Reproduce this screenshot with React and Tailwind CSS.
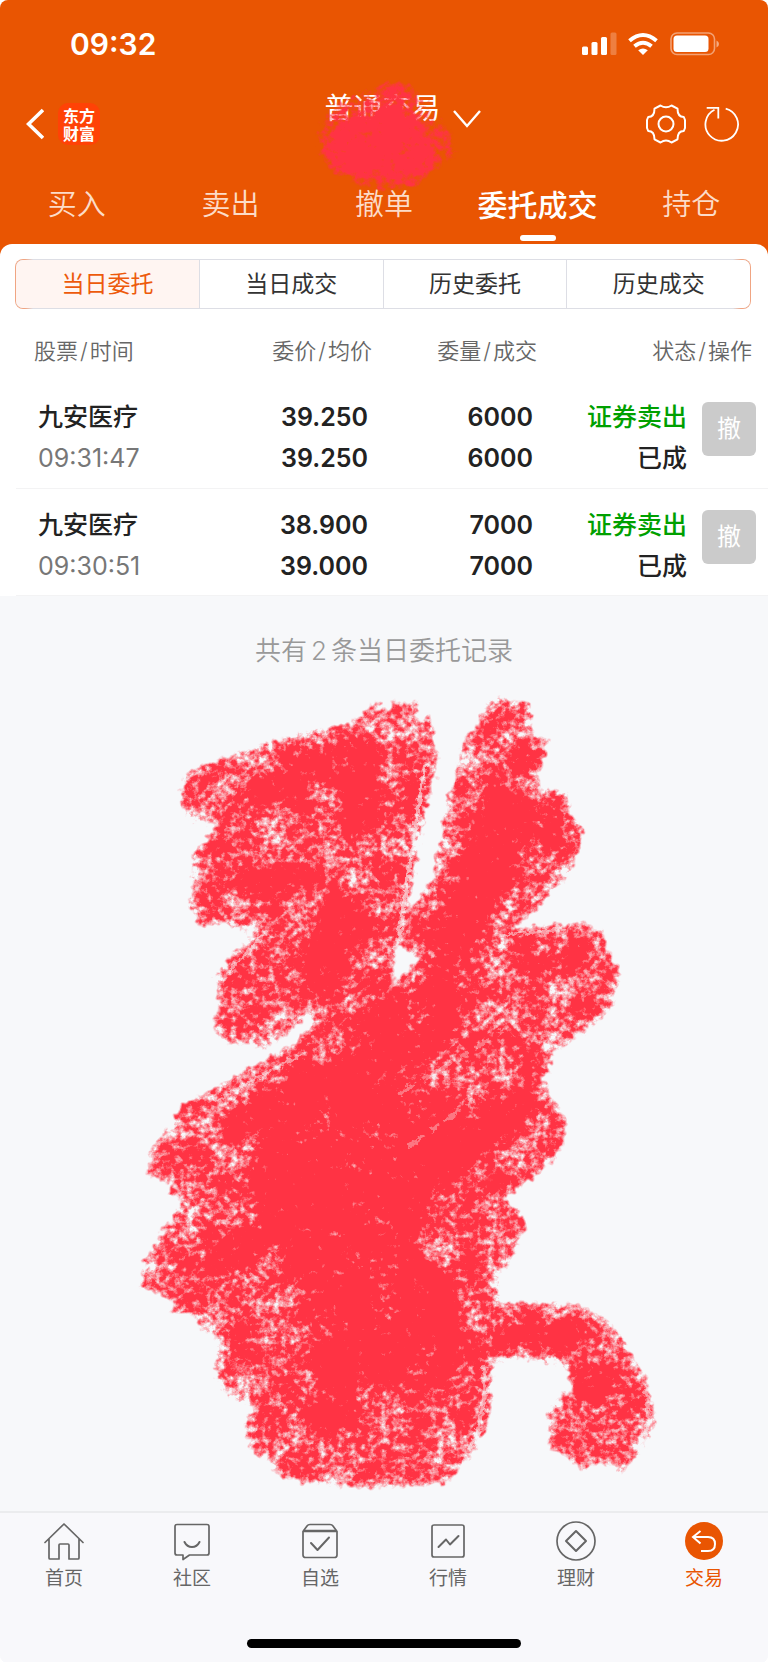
import { Fragment } from 'react';

const TABS = ['买入', '卖出', '撤单', '委托成交', '持仓'];
const SEGMENTS = ['当日委托', '当日成交', '历史委托', '历史成交'];

const ORDERS = [
  { name: '九安医疗', time: '09:31:47', price: '39.250', avg: '39.250', amount: '6000', filled: '6000', side: '证券卖出', status: '已成' },
  { name: '九安医疗', time: '09:30:51', price: '38.900', avg: '39.000', amount: '7000', filled: '7000', side: '证券卖出', status: '已成' },
];

const NAV = [
  { label: '首页', icon: HomeIcon },
  { label: '社区', icon: CommunityIcon },
  { label: '自选', icon: WatchlistIcon },
  { label: '行情', icon: MarketIcon },
  { label: '理财', icon: WealthIcon },
  { label: '交易', icon: TradeIcon, active: true },
];

const line = { fill: 'none', stroke: 'currentColor', strokeWidth: 1.7, strokeLinecap: 'round', strokeLinejoin: 'round' };

function HomeIcon() {
  return (
    <svg viewBox="0 0 40 40" className="h-10 w-10" {...line}>
      <path d="M1 21.5 20 3l19 18.5M5 18v19q0 1 1 1h9V24q0-1 1-1h8q1 0 1 1v14h9q1 0 1-1V18" />
    </svg>
  );
}

function CommunityIcon() {
  return (
    <svg viewBox="0 0 40 40" className="h-10 w-10" {...line}>
      <path d="M5 3.5h30q2 0 2 2V32q0 2-2 2H17.500l-6.500 4.500V34H5q-2 0-2-2V5.500q0-2 2-2Z" />
      <path d="M12.500 21q2.500 5 7.500 5t7.500-5" strokeWidth="2" />
    </svg>
  );
}

function WatchlistIcon() {
  return (
    <svg viewBox="0 0 40 40" className="h-10 w-10" {...line}>
      <path d="M3 10.500 7 5q1-1.500 3-1.500h20q2 0 3 1.500l4 5.500V34q0 2.500-2.500 2.500h-29Q3 36.500 3 34Z" />
      <path d="M4 10h32" strokeWidth="2.400" />
      <path d="m11 22 6.500 7L29 16.500" strokeWidth="2" />
    </svg>
  );
}

function MarketIcon() {
  return (
    <svg viewBox="0 0 40 40" className="h-10 w-10" {...line}>
      <rect x="4" y="4" width="32" height="32" rx="2" />
      <path d="m10.500 26 7.500-7.500 4 5L30.500 15" strokeWidth="2" />
    </svg>
  );
}

function WealthIcon() {
  return (
    <svg viewBox="0 0 40 40" className="h-10 w-10" {...line}>
      <circle cx="20" cy="20" r="19" />
      <path d="m20 10 10 10-10 10L10 20Z" strokeWidth="2" />
    </svg>
  );
}

function TradeIcon() {
  return (
    <svg viewBox="0 0 40 40" className="h-10 w-10" fill="none">
      <circle cx="20" cy="20" r="19" fill="#e95502" />
      <path d="M16.500 10 9 16l7.500 6.500M9.500 16H24q7 0 7 7t-7 7h-7" stroke="#fff" strokeWidth="2" />
    </svg>
  );
}

function StatusIcons() {
  return (
    <svg viewBox="0 0 138 24" className="h-6 w-[138px]" fill="none">
      <g fill="#fff">
        <rect x="0" y="14.500" width="6" height="8.500" rx="1.500" />
        <rect x="9.500" y="10" width="6" height="13" rx="1.500" />
        <rect x="19" y="5" width="6" height="18" rx="1.500" />
        <rect x="28.500" y="0.500" width="6" height="22.500" rx="1.500" opacity="0.25" />
        <path d="m61 23-4.800-4.800q4.800-3.600 9.600 0Z" />
      </g>
      <path d="M47.500 8.700q13.500-11.400 27 0" stroke="#fff" strokeWidth="4" />
      <path d="M52.500 14.300q8.500-7 17 0" stroke="#fff" strokeWidth="4" />
      <rect x="89" y="1" width="43.500" height="21.500" rx="6" stroke="#fff" strokeOpacity="0.45" strokeWidth="1.600" />
      <rect x="91.500" y="3.500" width="35" height="16.500" rx="3.500" fill="#fff" />
      <path d="M134.500 8.500q2.500 1 2.500 3.500t-2.500 3.500Z" fill="#fff" opacity="0.5" />
    </svg>
  );
}

function GearIcon() {
  return (
    <svg viewBox="0 0 40 40" className="h-10 w-10" fill="none" stroke="#fff" strokeWidth="2" strokeLinejoin="round">
      <path d="M14.500 1.500q5.500 3.500 11 0l6 3.200q0 8.300 6.300 8.300l1.200 3v8l-1.200 3q-6.300 0-6.300 8.300l-6 3.200q-5.500-4-11 0l-6-3.200Q8.500 27 2.200 27L1 24v-8l1.200-3q6.300 0 6.300-8.300Z" />
      <circle cx="20" cy="20" r="7.500" />
    </svg>
  );
}

function RefreshIcon() {
  return (
    <svg viewBox="0 0 36 36" className="h-9 w-9" fill="none" stroke="#fff" strokeWidth="1.800">
      <path d="M21.700 2.600A16.300 16.300 0 1 1 10.500 3.800M2.700 1.800H14.300V12.600" />
    </svg>
  );
}

// Chalk texture: density of the strokes plus fine and coarse grain, cut by a ragged edge
function ChalkFilter({ id, blur, offset }) {
  return (
    <filter id={id} x="-10%" y="-10%" width="120%" height="120%" colorInterpolationFilters="sRGB">
      <feTurbulence type="fractalNoise" baseFrequency="0.16" numOctaves="4" seed="11" result="noise" />
      <feColorMatrix in="noise" type="matrix" values="0 0 0 0 0  0 0 0 0 0  0 0 0 0 0  1 0 0 0 0" result="fine" />
      <feTurbulence type="fractalNoise" baseFrequency="0.035" numOctaves="3" seed="4" />
      <feColorMatrix type="matrix" values="0 0 0 0 0  0 0 0 0 0  0 0 0 0 0  1 0 0 0 0" result="coarse" />
      <feComposite in="fine" in2="coarse" operator="arithmetic" k1="0" k2="0.55" k3="0.45" k4="0" result="grain" />
      <feDisplacementMap in="SourceGraphic" in2="noise" scale="14" xChannelSelector="G" yChannelSelector="B" result="ragged" />
      <feGaussianBlur in="SourceGraphic" stdDeviation={blur} result="density" />
      <feComposite in="density" in2="grain" operator="arithmetic" k1="0" k2="1.8" k3="4" k4={offset} result="chalk" />
      <feGaussianBlur in="ragged" stdDeviation="0.8" />
      <feComponentTransfer result="mask">
        <feFuncA type="linear" slope="2.500" intercept="-0.200" />
      </feComponentTransfer>
      <feFlood floodColor="#ff3344" />
      <feComposite in2="chalk" operator="in" />
      <feComposite in2="mask" operator="in" />
    </filter>
  );
}

function TitleSmudge() {
  return (
    <svg viewBox="0 0 180 130" className="pointer-events-none absolute -top-4 -left-7 h-[130px] w-[180px]">
      <defs>
        <ChalkFilter id="chalk-title" blur="5" offset="-2.350" />
      </defs>
      <g filter="url(#chalk-title)">
        <path
          fill="#f34"
          fillOpacity="0.5"
          d="m62 14 30-7 22 1 12 14 14 20 15 14 7 24-10 9-24 15-12 9-30 3-30-8-20-12-16-20 4-26 16-20Z"
        />
        <path fill="#f34" d="m46 48 40-16 34 8 24 32-28 22-24 12-40-6-26-22Z" />
      </g>
    </svg>
  );
}

function Scribble() {
  return (
    <svg viewBox="0 680 768 830" className="block w-full" aria-hidden="true">
      <defs>
        <ChalkFilter id="chalk" blur="7" offset="-2.050" />
        <filter id="streak" x="-10%" y="-10%" width="120%" height="120%">
          <feTurbulence type="fractalNoise" baseFrequency="0.2" numOctaves="3" seed="3" result="noise" />
          <feDisplacementMap in="SourceGraphic" in2="noise" scale="8" xChannelSelector="R" yChannelSelector="G" />
          <feGaussianBlur stdDeviation="0.700" />
        </filter>
      </defs>
      <g filter="url(#chalk)">
        <path
          fill="#f34"
          fillOpacity="0.52"
          fillRule="evenodd"
          d="M182 777 192 768 244 750 302 730 350 723 380 698 378 712 388 710 396 696 400 706 419 697 418 722 431 715 438 760 430 793 419 847 407 913
            433 880 436 857 443 820 454 777 464 737 478 723 490 697 504 694 512 702 529 700 535 733 548 738 538 787 567 792 571 813 585 827
            574 867 536 910 512 928 578 922 603 928 607 950 621 970 612 1007 595 1023 554 1052 548 1067 543 1083 567 1122 564 1143 550 1163
            505 1197 519 1213 529 1225 512 1253 510 1263 498 1270 498 1303 543 1301 581 1305 612 1322 643 1370 656 1413 653 1433 636 1457
            624 1471 602 1462 578 1470 571 1457 550 1450 547 1413 560 1393 572 1393 569 1370 557 1362 529 1358 493 1363 492 1400 486 1430
            471 1453 447 1482 378 1487 316 1483 278 1475 269 1460 251 1450 245 1427 256 1402 240 1403 220 1385 214 1363 220 1340 199 1327
            195 1313 168 1312 178 1300 140 1287 144 1260 161 1233 185 1197 165 1195 178 1185 147 1173 151 1147 171 1127 178 1107 195 1098 244 1070
            295 1042 311 1023 309 1008 295 1028 263 1048 254 1043 223 1042 213 1023 220 1000 214 977 247 937 257 927 240 930 223 923 199 925
            189 903 194 880 190 857 220 823 192 822 182 807ZM396 944 420 957 392 984Z"
        />
        <g fill="none" stroke="#f34" strokeLinecap="round" strokeLinejoin="round" strokeOpacity="0.7">
          <path strokeWidth="30" d="M262 795 345 758" />
          <path strokeWidth="36" d="M362 758 358 820" />
          <path strokeWidth="22" d="M240 882 310 885" />
          <path strokeWidth="46" d="M345 920 322 970" />
          <path strokeWidth="44" d="M508 800 485 860 455 950" />
          <path strokeWidth="34" d="M525 820 475 900" />
          <path strokeWidth="24" d="M545 965 580 955" />
          <path strokeWidth="28" d="M235 1125 330 1080M215 1265 300 1215" />
          <path strokeWidth="34" d="M430 1160 520 1105" />
          <path strokeWidth="22" d="M500 1338 565 1338 596 1380 606 1405" />
          <path strokeWidth="34" d="M335 1370 325 1420" />
        </g>
        <path fill="#f34" fillOpacity="0.75" d="m370 1010 70-40 40 30-50 50-20 60 50-10 60-10-20 50-70 60-20 60 50 20 15 80-90 30-60 10-10-60-15-60-40-50-10-60 50-80Z" />
      </g>
      {/* Dry streaks between the strokes */}
      <g fill="none" stroke="#f7f8fa" strokeLinecap="round" filter="url(#streak)">
        <path strokeOpacity="0.6" strokeWidth="4" d="M425 765Q412 850 395 960" />
        <path strokeOpacity="0.35" strokeWidth="4" strokeDasharray="16 12 6 10" d="M400 1092 500 1032M410 1145 486 1090" />
        <path strokeOpacity="0.5" strokeWidth="4" d="M484 1366Q487 1415 470 1448M646 1385Q652 1430 638 1448" />
        <path strokeOpacity="0.5" strokeWidth="3" d="M505 934 565 928M215 1100 302 1053M228 972 265 932" />
      </g>
    </svg>
  );
}

function OrderRow({ order }) {
  return (
    <tr className="h-[107px] border-b border-[#f3f3f4] text-right text-[25px] leading-[41px] font-semibold text-[#222]">
      <td className="pt-2 pl-[22px] text-left">
        <div className="font-medium">{order.name}</div>
        <div className="font-normal text-[#777]">{order.time}</div>
      </td>
      <td className="pt-2 pr-1">
        <div>{order.price}</div>
        <div>{order.avg}</div>
      </td>
      <td className="pt-2 pr-1">
        <div>{order.amount}</div>
        <div>{order.filled}</div>
      </td>
      <td className="pt-2 font-medium">
        <div className="text-[#00a000]">{order.side}</div>
        <div>{order.status}</div>
      </td>
      <td className="pt-[21px] pr-3 align-top">
        <button type="button" className="ml-auto block h-[54px] w-[54px] rounded-md bg-[#cbcbcb] text-2xl font-normal text-white">
          撤
        </button>
      </td>
    </tr>
  );
}

export default function App() {
  return (
    <div className="bg-white font-['Inter','Noto_Sans_CJK_SC',sans-serif]">
      <div className="flex min-h-screen flex-col overflow-hidden rounded-lg bg-[#f7f8fa]">
        <header className="bg-[#e95502] text-white">
          {/* Status bar */}
          <div className="flex h-[84px] items-center justify-between pt-1 pr-[48px] pl-[70px]">
            <span className="text-[30px] font-semibold">09:32</span>
            <StatusIcons />
          </div>

          {/* Title bar */}
          <div className="grid h-20 grid-cols-3 items-center pr-[28px] pl-[26px]">
            <div className="flex items-center gap-[14px]">
              <button type="button" aria-label="返回">
                <svg viewBox="0 0 18 32" className="h-8 w-[18px]" fill="none" stroke="#fff" strokeWidth="3.600">
                  <path d="M17 2 2.500 16 17 30" />
                </svg>
              </button>
              <span className="flex h-[42px] w-[42px] items-center justify-center rounded-[10px] bg-[#ff4206]">
                <span className="w-8 font-['Noto_Sans_CJK_SC',sans-serif] text-base leading-[18px] font-bold">东方财富</span>
              </span>
            </div>
            <div className="relative mb-[30px] flex items-center justify-center">
              <button type="button" className="relative ml-[39px] flex items-center gap-3">
                <span className="relative text-[29px] leading-9">
                  普通交易
                  <TitleSmudge />
                </span>
                <svg viewBox="0 0 28 18" className="mt-5 h-[18px] w-7" fill="none" stroke="#fff" strokeWidth="2.400">
                  <path d="m1 1 13 15L27 1" />
                </svg>
              </button>
            </div>
            <div className="flex items-center justify-end gap-[18px]">
              <button type="button" aria-label="设置">
                <GearIcon />
              </button>
              <button type="button" aria-label="刷新">
                <RefreshIcon />
              </button>
            </div>
          </div>

          {/* Main tabs */}
          <nav className="grid h-20 grid-cols-5">
            {TABS.map((tab) => (
              <a
                key={tab}
                href="#"
                className={`flex flex-col items-center pt-[19px] leading-[44px] ${
                  tab === '委托成交' ? 'text-[30px] font-medium text-white' : 'text-[29px] font-[350] text-[#fcdcc8]'
                }`}
              >
                {tab}
                {tab === '委托成交' && <span className="mt-2 h-[6px] w-9 rounded-full bg-white" />}
              </a>
            ))}
          </nav>
        </header>

        <div className="bg-[#e95502]">
          <section className="rounded-t-xl bg-white pt-[15px]">
            {/* Segmented control */}
            <div className="mr-[17px] ml-[15px] rounded-lg bg-[linear-gradient(90deg,#f0a583_0,#f0a583_10px,#dddee5_18px,#dddee5_calc(100%-18px),#f0a583_calc(100%-10px),#f0a583_100%)] p-px">
              <div className="grid grid-cols-4 gap-px overflow-hidden rounded-[7px] bg-[#dddee5]">
                {SEGMENTS.map((segment, index) => (
                  <button
                    key={segment}
                    type="button"
                    className={`h-12 text-[23px] ${index === 0 ? 'bg-[#fff5f2] text-[#ed5a0c]' : 'bg-white text-[#333]'}`}
                  >
                    {segment}
                  </button>
                ))}
              </div>
            </div>

            {/* Orders */}
            <div className="pl-4">
              <table className="w-full table-fixed">
                <colgroup>
                  <col />
                  <col className="w-[150px]" />
                  <col className="w-[165px]" />
                  <col className="w-[150px]" />
                  <col className="w-[81px]" />
                </colgroup>
                <thead>
                  <tr className="h-[72px] text-right text-[22px] text-[#666]">
                    {['股票/时间', '委价/均价', '委量/成交', '状态/操作'].map((title, index) => (
                      <th
                        key={title}
                        colSpan={index === 3 ? 2 : 1}
                        className={`pt-3 font-[350] ${index === 0 ? 'pl-[18px] text-left' : ''} ${index === 3 ? 'pr-4' : ''}`}
                      >
                        {title.split('/').map((part, i) => (
                          <Fragment key={part}>
                            {i > 0 && <span className="px-[2px]">/</span>}
                            {part}
                          </Fragment>
                        ))}
                      </th>
                    ))}
                  </tr>
                </thead>
                <tbody>
                  {ORDERS.map((order) => (
                    <OrderRow key={order.time} order={order} />
                  ))}
                </tbody>
              </table>
            </div>
          </section>
        </div>

        <main className="flex-1">
          <p className="pt-[35px] pb-[10px] text-center text-[26px] leading-10 font-[350] text-[#999]">
            共有<span className="px-1">2</span>条当日委托记录
          </p>
          <Scribble />
        </main>

        {/* Bottom navigation */}
        <footer className="border-t-2 border-[#ebecee] bg-[#f8f8fb] pb-[15px]">
          <nav className="grid grid-cols-6 pt-2">
            {NAV.map(({ label, icon: Icon, active }) => (
              <a
                key={label}
                href="#"
                className={`flex flex-col items-center gap-1 text-[19px] leading-7 ${active ? 'text-[#e95502]' : 'text-[#666]'}`}
              >
                <Icon />
                {label}
              </a>
            ))}
          </nav>
          <div className="mx-auto mt-[46px] h-[9px] w-[274px] rounded-full bg-black" />
        </footer>
      </div>
    </div>
  );
}
